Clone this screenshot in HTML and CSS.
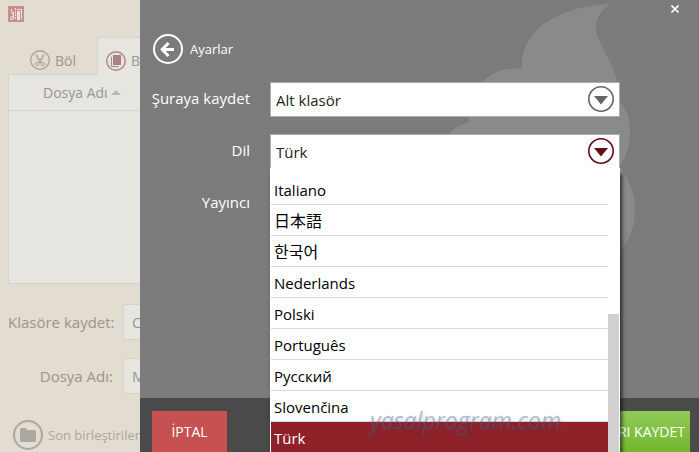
FILE: index.html
```html
<!DOCTYPE html>
<html lang="tr">
<head>
  <meta charset="UTF-8">
  <meta name="viewport" content="width=device-width, initial-scale=1.0">
  <title>Ayarlar</title>
  <link rel="stylesheet" href="styles.css">
</head>
<body>
  <main class="window">
    <header class="titlebar">
      <svg class="logo" viewBox="0 0 16 16" width="16" height="16">
        <rect width="16" height="16" fill="#c78e8b"/>
        <path d="M3.500 3v3l2 3v3M5.500 6v4" fill="none" stroke="#eee3db"/>
        <circle cx="4" cy="12" r="1.500" fill="none" stroke="#eee3db"/>
        <path d="M7.500 2v12" stroke="#eee3db" stroke-dasharray="2 1"/>
        <path d="M9 3.500h4.500V13" fill="none" stroke="#eee3db"/>
        <rect x="9" y="5" width="3" height="9" fill="#eee3db"/>
      </svg>
    </header>

    <nav class="tabs">
      <button class="tab">
        <svg viewBox="0 0 20 20" width="20" height="20" fill="none" stroke="#a9a69f">
          <circle cx="10" cy="10" r="9.300" stroke-width="1.400"/>
          <path d="M6.500 4.500c0 3 2 4.500 5 8.500M13.500 4.500c0 3-2 4.500-5 8.500" stroke-width="1.500"/>
          <circle cx="7.200" cy="14" r="1.700"/>
          <circle cx="12.800" cy="14" r="1.700"/>
        </svg>
        Böl
      </button>
      <button class="tab active">
        <svg viewBox="0 0 20 20" width="20" height="20">
          <circle cx="10" cy="10" r="9.300" fill="none" stroke="#b08583" stroke-width="1.400"/>
          <path d="M5.500 6v9.500h7" fill="none" stroke="#b08583"/>
          <rect x="7" y="4" width="8" height="10" fill="#ab8280"/>
        </svg>
        Birleştir
      </button>
    </nav>

    <table class="files">
      <thead>
        <tr><th>Dosya Adı <span class="sort"></span></th></tr>
      </thead>
      <tbody>
        <tr><td></td></tr>
      </tbody>
    </table>

    <div class="output">
      <label for="folder">Klasöre kaydet:</label>
      <input id="folder" type="text" value="C:\Users\Documents">
      <label for="filename">Dosya Adı:</label>
      <input id="filename" type="text" value="Merged">
    </div>

    <a class="recent" href="#">
      <svg viewBox="0 0 30 30" width="30" height="30">
        <circle cx="15" cy="15" r="14" fill="none" stroke="#aaa8a1" stroke-width="2"/>
        <path d="M7 9.500q0-1.500 1.500-1.500h4l2 2h7q1.500 0 1.500 1.500v9q0 1.500-1.500 1.500h-13q-1.500 0-1.500-1.500z" fill="#aaa8a1"/>
      </svg>
      Son birleştirilen
    </a>
  </main>

  <section class="drawer">
    <svg class="flame" viewBox="439 0 260 260" width="260" height="260">
      <path d="M611 4C560 6 519 29 522 69C506 67 493 71 482 82C471 92 468 105 469 122C455 126 443 136 439 150V260H613C627 246 635 230 635 210C635 194 629 178 619 166C631 152 636 118 620 102C622 70 596 46 596 27C596 17 602 9 611 4Z" fill="#8a8a8a"/>
    </svg>

    <button class="close" aria-label="Kapat">
      <svg viewBox="0 0 8 8" width="8" height="8"><path d="M.5.5l7 7M7.500.5l-7 7" stroke="#fff" stroke-width="1.600"/></svg>
    </button>

    <header class="drawer-head">
      <button class="back" aria-label="Geri">
        <svg viewBox="0 0 30 30" width="30" height="30" fill="none" stroke="#fff">
          <circle cx="15" cy="15" r="14" stroke-width="2"/>
          <path d="M21 15.500H9.500" stroke-width="3"/>
          <path d="M15.500 9l-6.300 6.500 6.300 6.500" stroke-width="3"/>
        </svg>
      </button>
      <h1>Ayarlar</h1>
    </header>

    <form class="settings">
      <label for="save-to">Şuraya kaydet</label>
      <div class="field">
        <select id="save-to">
          <option>Alt klasör</option>
        </select>
        <svg class="arrow" viewBox="0 0 26 26" width="26" height="26">
          <circle cx="13" cy="13" r="12.200" fill="none" stroke="currentColor" stroke-width="1.600"/>
          <path d="M6 10h14l-7 8.500z" fill="currentColor"/>
        </svg>
      </div>

      <label for="language">Dil</label>
      <div class="field open">
        <select id="language">
          <option>Türk</option>
        </select>
        <svg class="arrow" viewBox="0 0 26 26" width="26" height="26">
          <circle cx="13" cy="13" r="12.200" fill="none" stroke="currentColor" stroke-width="1.600"/>
          <path d="M6 10h14l-7 8.500z" fill="currentColor"/>
        </svg>
        <div class="popup">
          <ul role="listbox" aria-label="Dil">
            <li role="option">Italiano</li>
            <li role="option" lang="ja">日本語</li>
            <li role="option" lang="ko">한국어</li>
            <li role="option">Nederlands</li>
            <li role="option">Polski</li>
            <li role="option">Português</li>
            <li role="option">Русский</li>
            <li role="option">Slovenčina</li>
            <li role="option" class="selected" aria-selected="true">Türk</li>
          </ul>
          <div class="scroll"><div class="thumb"></div></div>
        </div>
      </div>

      <span class="label">Yayıncı</span>
    </form>

    <footer class="actions">
      <button class="cancel">İPTAL</button>
      <button class="save">AYARLARI KAYDET</button>
    </footer>

    <div class="watermark">yasalprogram.com</div>
  </section>
</body>
</html>
```

FILE: styles.css
```css
* {
  box-sizing: border-box;
  margin: 0;
  padding: 0;
}
body {
  position: relative;
  height: 100vh;
  overflow: hidden;
  font-family: "Open Sans", "Noto Sans", "Noto Sans CJK JP", sans-serif;
  font-size: 15px;
  background: #e3dcd0;
}
button, input, select {
  font: inherit;
  color: inherit;
  border: none;
  background: none;
}
button {
  cursor: pointer;
}
svg {
  display: block;
  flex: none;
}

/* main window */
.window {
  height: 100%;
  display: flex;
  flex-direction: column;
  padding: 6px 8px 0;
  color: #989690;
}
.titlebar {
  height: 31px;
}
.tabs {
  display: flex;
  height: 38px;
  margin-bottom: -1px;
  font-size: 14px;
}
.tab {
  display: flex;
  align-items: center;
  gap: 5px;
  padding: 8px 21px 0 22px;
}
.tab.active {
  position: relative;
  padding: 8px 8px 0;
  background: #e6e5e0;
  border: 1px solid #d4d3cf;
  border-bottom: none;
}
.files {
  width: 100%;
  height: 210px;
  flex: none;
  border-collapse: collapse;
  border: 1px solid #d4d3cf;
  background: #e6e5e0;
}
.files th {
  height: 36px;
  padding-left: 34px;
  text-align: left;
  font-size: 14px;
  font-weight: normal;
  border-bottom: 1px solid #d4d3cf;
}
.sort {
  display: inline-block;
  margin-bottom: 3px;
  border: 5px solid transparent;
  border-top: none;
  border-bottom-color: #b9b7b1;
}
.output {
  display: grid;
  grid-template-columns: 105px 1fr;
  column-gap: 10px;
  row-gap: 18px;
  align-items: center;
  margin-top: 20px;
}
.output label {
  text-align: right;
  white-space: nowrap;
}
.output input {
  height: 36px;
  padding: 0 8px;
  background: #e6e5e0;
  border: 1px solid #d4d3cf;
}
.recent {
  display: flex;
  align-items: center;
  gap: 5px;
  margin: 26px 0 0 5px;
  font-size: 13px;
  color: #aaa8a1;
  text-decoration: none;
}

/* settings drawer */
.drawer {
  position: absolute;
  top: 0;
  right: 0;
  bottom: 0;
  left: 140px;
  display: flex;
  flex-direction: column;
  overflow: hidden;
  color: #fff;
  background: #7b7b7b;
}
.flame {
  position: absolute;
  top: 0;
  right: 0;
}
.close {
  position: absolute;
  top: 0;
  right: 15px;
  padding: 5px;
}
.drawer-head {
  display: flex;
  align-items: center;
  gap: 7px;
  padding: 34px 13px 18px;
}
.drawer-head h1 {
  font-size: 13px;
  font-weight: normal;
}
.settings {
  flex: 1;
  display: grid;
  grid-template-columns: 98px 1fr;
  grid-auto-rows: 35px;
  gap: 17px 20px;
  align-items: center;
  padding: 0 79px 0 12px;
}
.settings label, .settings .label {
  display: flex;
  justify-content: flex-end;
  padding-bottom: 4px;
  white-space: nowrap;
}
.field {
  position: relative;
  color: #666;
}
.field select {
  display: block;
  width: 100%;
  height: 35px;
  padding: 0 36px 0 5px;
  appearance: none;
  color: #222;
  background: #fff;
  border: 1px solid #adadad;
}
.field .arrow {
  position: absolute;
  top: 4px;
  right: 6px;
  pointer-events: none;
}
.field.open {
  z-index: 1;
  color: #640d14;
}
.popup {
  position: absolute;
  top: 34px;
  left: 0;
  right: 0;
  display: flex;
  padding: 6px 1px 0;
  color: #000;
  background: #fff;
  box-shadow: 2px 6px 4px rgba(0, 0, 0, 0.7);
}
.popup ul {
  flex: 1;
  list-style: none;
}
.popup li {
  height: 31px;
  padding-left: 3px;
  line-height: 32px;
  border-bottom: 1px solid #d8d8d8;
}
.popup li:lang(ja), .popup li:lang(ko) {
  font-family: "Noto Sans CJK JP", sans-serif;
  font-size: 16px;
  line-height: 30px;
}
.popup li:lang(ko) {
  font-family: "Noto Sans CJK KR", sans-serif;
}
.popup li.selected {
  color: #fff;
  background: #8f2229;
  border-color: #8f2229;
}
.scroll {
  display: flex;
  align-items: flex-end;
  width: 11px;
}
.thumb {
  width: 100%;
  height: 50%;
  background: #d0d0d0;
}
.actions {
  display: flex;
  justify-content: space-between;
  height: 54px;
  padding: 13px 9px 0 12px;
  font-size: 14px;
  background: #4a4a4a;
}
.cancel {
  width: 75px;
  background: #c75050;
}
.save {
  padding: 0 5px;
  background: linear-gradient(#8fca58, #72b72e);
}
.watermark {
  position: absolute;
  z-index: 2;
  right: 138px;
  bottom: 18px;
  font-size: 23px;
  font-style: italic;
  font-weight: 400;
  line-height: 28px;
  color: rgba(70, 95, 145, 0.4);
  text-shadow: 1px 2px 4px rgba(70, 80, 110, 0.3);
  pointer-events: none;
}
```
